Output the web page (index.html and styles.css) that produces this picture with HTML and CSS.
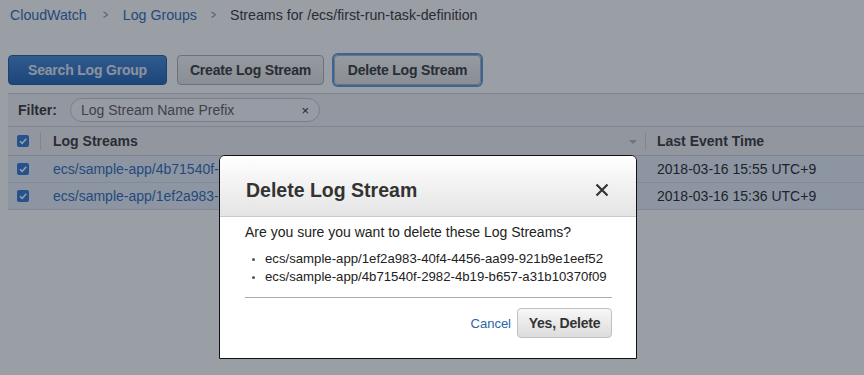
FILE: index.html
```html
<!DOCTYPE html>
<html>
<head>
<meta charset="utf-8">
<link rel="stylesheet" href="styles.css">
</head>
<body>
<div class="page">
  <nav class="crumbs">
    <a class="crumb-link">CloudWatch</a>
    <span class="sep sep-first">&gt;</span>
    <a class="crumb-link">Log Groups</a>
    <span class="sep">&gt;</span>
    <span class="crumb-current">Streams for /ecs/first-run-task-definition</span>
  </nav>
  <div class="toolbar">
    <button class="btn btn-primary">Search Log Group</button>
    <button class="btn btn-create">Create Log Stream</button>
    <button class="btn btn-focus">Delete Log Stream</button>
  </div>
  <div class="filter-bar">
    <span class="filter-label">Filter:</span>
    <div class="filter-input">
      <span class="placeholder">Log Stream Name Prefix</span>
      <span class="clear">×</span>
    </div>
  </div>
  <div class="table">
    <div class="row head">
      <div class="cell c-check"><span class="checkbox"><svg viewBox="0 0 12 12" width="12" height="12"><path d="M3 6.2 L5.2 8.4 L9.2 3.8" fill="none" stroke="#fff" stroke-width="1.6"/></svg></span></div>
      <div class="cell c-name">Log Streams<span class="sort"></span></div>
      <div class="cell c-time">Last Event Time</div>
    </div>
    <div class="row sel">
      <div class="cell c-check"><span class="checkbox"><svg viewBox="0 0 12 12" width="12" height="12"><path d="M3 6.2 L5.2 8.4 L9.2 3.8" fill="none" stroke="#fff" stroke-width="1.6"/></svg></span></div>
      <div class="cell c-name"><a class="link">ecs/sample-app/4b71540f-2982-4b19-b657-a31b10370f09</a></div>
      <div class="cell c-time">2018-03-16 15:55 UTC+9</div>
    </div>
    <div class="row sel">
      <div class="cell c-check"><span class="checkbox"><svg viewBox="0 0 12 12" width="12" height="12"><path d="M3 6.2 L5.2 8.4 L9.2 3.8" fill="none" stroke="#fff" stroke-width="1.6"/></svg></span></div>
      <div class="cell c-name"><a class="link">ecs/sample-app/1ef2a983-40f4-4456-aa99-921b9e1eef52</a></div>
      <div class="cell c-time">2018-03-16 15:36 UTC+9</div>
    </div>
  </div>
</div>
<div class="overlay"></div>
<div class="modal">
  <div class="modal-head">
    <h2 class="modal-title">Delete Log Stream</h2>
    <svg class="close" viewBox="0 0 14 14" width="14" height="14"><path d="M1.5 1.5 L12.5 12.5 M12.5 1.5 L1.5 12.5" stroke="#333" stroke-width="2.2" fill="none"/></svg>
  </div>
  <div class="modal-body">
    <p class="question">Are you sure you want to delete these Log Streams?</p>
    <ul class="items">
      <li>ecs/sample-app/1ef2a983-40f4-4456-aa99-921b9e1eef52</li>
      <li>ecs/sample-app/4b71540f-2982-4b19-b657-a31b10370f09</li>
    </ul>
    <div class="modal-foot">
      <a class="cancel">Cancel</a>
      <button class="btn btn-yes">Yes, Delete</button>
    </div>
  </div>
</div>
</body>
</html>
```

FILE: styles.css
```css
html, body {
  margin: 0;
  padding: 0;
  background: #fff;
  font-family: "Liberation Sans", Arial, Helvetica, sans-serif;
  color: #333;
  width: 864px;
  height: 375px;
  overflow: hidden;
}
.page {
  width: 864px;
}
.crumbs {
  display: flex;
  align-items: center;
  height: 30px;
  padding-left: 10px;
  font-size: 14.2px;
}
.crumb-link {
  color: #3a74b8;
}
.sep {
  color: #888;
  font-size: 12px;
  margin: 0 13px 0 13px;
  transform: scaleX(0.7);
}
.sep-first {
  margin: 0 14px 0 15px;
}
.crumb-current {
  color: #444;
}
.toolbar {
  display: flex;
  align-items: center;
  gap: 10px;
  margin-top: 25px;
  padding-left: 8px;
  height: 30px;
}
.btn {
  font-family: "Liberation Sans", Arial, sans-serif;
  font-weight: bold;
  font-size: 14px;
  height: 30px;
  border-radius: 4px;
  border: 1px solid #b4b4b4;
  background: linear-gradient(#f8f8f8, #e4e4e4);
  color: #444;
  padding: 0;
  white-space: nowrap;
  letter-spacing: -0.2px;
}
.btn-primary {
  width: 159px;
  border-color: #2c64a8;
  background: linear-gradient(#4f8fd8, #2f6cb8);
  color: #e6ecf4;
}
.btn-create {
  width: 147px;
}
.btn-focus {
  width: 147px;
  box-shadow: 0 0 0 2px #5fa0e6;
}
.filter-bar {
  display: flex;
  align-items: center;
  margin: 8px 0 0 8px;
  height: 32px;
  border-top: 1px solid #d0d3d8;
  background: #f4f5f7;
}
.filter-label {
  font-weight: bold;
  font-size: 14px;
  color: #444;
  margin-left: 10px;
  width: 52px;
}
.filter-input {
  display: flex;
  align-items: center;
  justify-content: space-between;
  box-sizing: border-box;
  width: 250px;
  height: 24px;
  border: 1px solid #c9ccd1;
  border-radius: 12px;
  background: #fbfbfc;
  padding: 0 10px 0 10px;
  font-size: 14px;
}
.placeholder {
  color: #666;
}
.clear {
  color: #333;
  font-size: 13px;
}
.table {
  margin-left: 8px;
  border-top: 1px solid #d6d8dc;
}
.row {
  display: flex;
  align-items: center;
  height: 26px;
  border-bottom: 1px solid #d6dde6;
  font-size: 14px;
}
.row.head {
  height: 28px;
  background: #f2f3f5;
  border-bottom: 1px solid #cfd2d7;
  font-weight: bold;
  color: #444;
}
.row.sel {
  background: #e9f1fb;
}
.cell {
  height: 100%;
  display: flex;
  align-items: center;
  box-sizing: border-box;
}
.c-check {
  width: 33px;
  padding-left: 9px;
}
.head .c-check {
  border-right: 1px solid #d4d6da;
  height: 18px;
}
.c-name {
  width: 605px;
  padding-left: 12px;
  position: relative;
}
.head .c-name {
  border-right: 1px solid #d4d6da;
  height: 18px;
}
.sort {
  position: absolute;
  right: 8px;
  top: 8px;
  width: 0;
  height: 0;
  border-left: 4px solid transparent;
  border-right: 4px solid transparent;
  border-top: 4px solid #b5b7bb;
}
.c-time {
  padding-left: 11px;
  color: #333;
}
.head .c-time {
  color: #444;
}
.checkbox {
  width: 12px;
  height: 12px;
  border-radius: 2px;
  background: #3d7fd6;
  display: flex;
}
.link {
  color: #3a74b8;
}
.overlay {
  position: absolute;
  left: 0;
  top: 0;
  width: 864px;
  height: 375px;
  background: rgba(3, 13, 30, 0.4);
}
.modal {
  position: absolute;
  left: 219px;
  top: 155px;
  width: 418px;
  height: 204px;
  box-sizing: border-box;
  border: 1px solid #111;
  border-radius: 6px 6px 0 0;
  background: #fff;
  overflow: hidden;
}
.modal-head {
  display: flex;
  align-items: center;
  justify-content: space-between;
  height: 60px;
  padding: 0 27px 0 26px;
  background: linear-gradient(#ffffff, #e4e4e4);
  border-bottom: 1px solid #c9c9c9;
}
.modal-title {
  margin: 0;
  font-size: 19.5px;
  font-weight: bold;
  color: #333;
  padding-top: 8px;
}
.close {
  margin-top: 8px;
}
.modal-body {
  padding: 0 24px 0 25px;
}
.question {
  margin: 6px 0 0;
  font-size: 14px;
  line-height: 18px;
  color: #222;
}
.items {
  margin: 9px 0 0;
  padding-left: 20px;
  font-size: 13.2px;
  line-height: 18px;
  color: #222;
}
.items li::marker {
  font-size: 10px;
  color: #555;
}
.modal-foot {
  display: flex;
  align-items: center;
  justify-content: flex-end;
  gap: 6px;
  margin-top: 11px;
  border-top: 1px solid #ababab;
  padding-top: 10px;
}
.cancel {
  color: #2b64a8;
  font-size: 13px;
}
.btn-yes {
  width: 95px;
  color: #333;
  border-color: #c0c0c0;
  background: linear-gradient(#f7f7f7, #dcdcdc);
}
```
